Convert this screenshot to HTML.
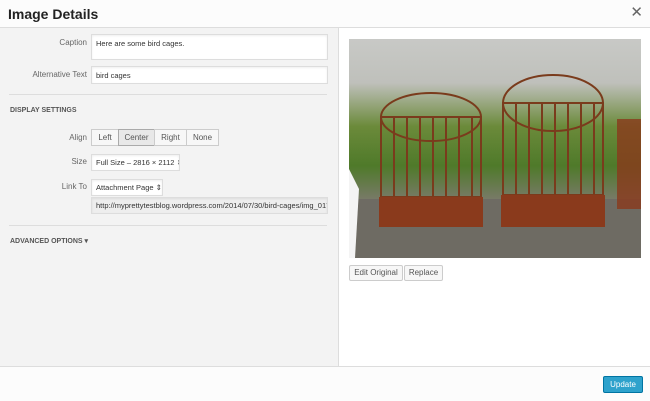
<!DOCTYPE html>
<html><head><style>
*{box-sizing:border-box;margin:0;padding:0}
body{width:650px;height:401px;overflow:hidden;font-family:"Liberation Sans",sans-serif;background:#fff;position:relative;color:#444}
.hdr{position:absolute;left:0;top:0;width:650px;height:28px;background:#fcfcfc;border-bottom:1px solid #ddd}
.hdr h1{position:absolute;left:8px;top:6px;font-size:14px;font-weight:bold;color:#222}
.x{position:absolute;right:7px;top:3px;font-size:15px;color:#666}
.left{position:absolute;left:0;top:28px;width:339px;height:338px;background:#f3f3f3;border-right:1px solid #ddd}
.lbl{position:absolute;font-size:8px;color:#666;text-align:right;width:80px;left:7px}
.in{position:absolute;background:#fff;border:1px solid #ddd;font-size:7.5px;color:#333;padding:4px 4px;white-space:nowrap;overflow:hidden;box-shadow:inset 0 1px 2px rgba(0,0,0,.07)}
.sep{position:absolute;left:9px;width:318px;height:1px;background:#ddd}
.h{position:absolute;left:10px;font-size:7px;font-weight:bold;color:#555}
.btn{position:absolute;top:129px;height:17px;border:1px solid #ccc;background:#f7f7f7;font-size:8px;color:#555;text-align:center;line-height:15px}
.foot{position:absolute;left:0;top:366px;width:650px;height:35px;background:#fcfcfc;border-top:1px solid #ddd}
.upd{position:absolute;left:603px;top:376px;width:40px;height:17px;background:#2ea2cc;border:1px solid #0074a2;border-radius:2px;color:#fff;font-size:8px;text-align:center;line-height:15px}
.wb{position:absolute;top:265px;height:16px;border:1px solid #ccc;background:#f7f7f7;border-radius:2px;font-size:8px;color:#555;text-align:center;line-height:14px}
.photo{position:absolute;left:349px;top:39px;width:292px;height:219px;overflow:hidden;background:linear-gradient(#c8c9c6 0%,#bfc0bb 20%,#6b8a3a 40%,#4f7a2a 58%,#7d7a6f 75%,#5f5c55 100%)}
</style></head><body>
<div class="hdr"><h1>Image Details</h1><div class="x">✕</div></div>
<div class="left">
</div>
<div class="lbl" style="top:38px">Caption</div>
<div class="in" style="left:91px;top:34px;width:237px;height:26px">Here are some bird cages.</div>
<div class="lbl" style="top:70px">Alternative Text</div>
<div class="in" style="left:91px;top:66px;width:237px;height:18px">bird cages</div>
<div class="sep" style="top:94px"></div>
<div class="h" style="top:107px">DISPLAY SETTINGS</div>
<div class="lbl" style="top:133px">Align</div>
<div class="btn" style="left:91px;width:28px">Left</div>
<div class="btn" style="left:118px;width:37px;background:#e8e8e8;border-color:#aaa">Center</div>
<div class="btn" style="left:154px;width:33px">Right</div>
<div class="btn" style="left:186px;width:33px">None</div>
<div class="lbl" style="top:157px">Size</div>
<div class="in" style="left:91px;top:154px;width:89px;height:17px;padding:3px 4px">Full Size – 2816 × 2112 ⇕</div>
<div class="lbl" style="top:182px">Link To</div>
<div class="in" style="left:91px;top:179px;width:72px;height:17px;padding:3px 4px">Attachment Page ⇕</div>
<div class="in" style="left:91px;top:197px;width:237px;height:17px;padding:3px 4px;background:#eee">http://myprettytestblog.wordpress.com/2014/07/30/bird-cages/img_0176</div>
<div class="sep" style="top:225px"></div>
<div class="h" style="top:237px">ADVANCED OPTIONS ▾</div>
<div class="photo">
<svg width="292" height="219">
<rect x="0" y="160" width="292" height="59" fill="#6e6b63"/>
<polygon points="0,130 10,150 6,219 0,219" fill="#f4f4f4"/>
<g fill="none" stroke="#7a3b1c" stroke-width="2">
<ellipse cx="82" cy="78" rx="50" ry="24"/>
<rect x="32" y="78" width="100" height="80"/>
<path d="M45 78V158M58 78V158M71 78V158M84 78V158M97 78V158M110 78V158M123 78V158"/>
<ellipse cx="204" cy="64" rx="50" ry="28"/>
<rect x="154" y="64" width="100" height="92"/>
<path d="M167 64V156M180 64V156M193 64V156M206 64V156M219 64V156M232 64V156M245 64V156"/>
</g>
<rect x="30" y="158" width="104" height="30" fill="#8a3a1c"/>
<rect x="152" y="156" width="104" height="32" fill="#8a3a1c"/>
<rect x="268" y="80" width="24" height="90" fill="#8a3a1c" opacity=".8"/>
</svg>
</div>
<div class="wb" style="left:349px;width:54px">Edit Original</div>
<div class="wb" style="left:404px;width:39px">Replace</div>
<div class="foot"></div>
<div class="upd">Update</div>
</body></html>
